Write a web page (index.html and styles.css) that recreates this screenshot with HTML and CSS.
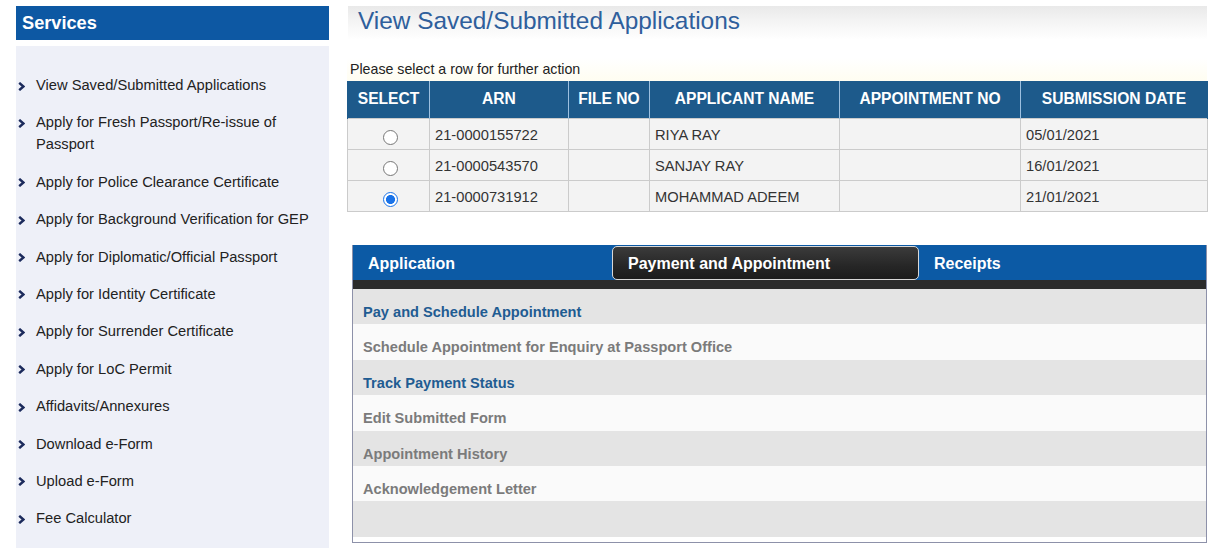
FILE: index.html
```html
<!DOCTYPE html>
<html>
<head>
<meta charset="utf-8">
<title>View Saved/Submitted Applications</title>
<link rel="stylesheet" href="styles.css">
</head>
<body>
<div class="page">
  <aside class="sidebar">
    <div class="side-head">Services</div>
    <ul class="side-menu">
      <li><span class="chev"><svg width="7" height="9" viewBox="0 0 7 9"><polyline points="1.2,0.8 5.4,4.5 1.2,8.2" fill="none" stroke="#1c2b5c" stroke-width="2.4"/></svg></span><span>View Saved/Submitted Applications</span></li>
      <li><span class="chev"><svg width="7" height="9" viewBox="0 0 7 9"><polyline points="1.2,0.8 5.4,4.5 1.2,8.2" fill="none" stroke="#1c2b5c" stroke-width="2.4"/></svg></span><span>Apply for Fresh Passport/Re-issue of Passport</span></li>
      <li><span class="chev"><svg width="7" height="9" viewBox="0 0 7 9"><polyline points="1.2,0.8 5.4,4.5 1.2,8.2" fill="none" stroke="#1c2b5c" stroke-width="2.4"/></svg></span><span>Apply for Police Clearance Certificate</span></li>
      <li><span class="chev"><svg width="7" height="9" viewBox="0 0 7 9"><polyline points="1.2,0.8 5.4,4.5 1.2,8.2" fill="none" stroke="#1c2b5c" stroke-width="2.4"/></svg></span><span>Apply for Background Verification for GEP</span></li>
      <li><span class="chev"><svg width="7" height="9" viewBox="0 0 7 9"><polyline points="1.2,0.8 5.4,4.5 1.2,8.2" fill="none" stroke="#1c2b5c" stroke-width="2.4"/></svg></span><span>Apply for Diplomatic/Official Passport</span></li>
      <li><span class="chev"><svg width="7" height="9" viewBox="0 0 7 9"><polyline points="1.2,0.8 5.4,4.5 1.2,8.2" fill="none" stroke="#1c2b5c" stroke-width="2.4"/></svg></span><span>Apply for Identity Certificate</span></li>
      <li><span class="chev"><svg width="7" height="9" viewBox="0 0 7 9"><polyline points="1.2,0.8 5.4,4.5 1.2,8.2" fill="none" stroke="#1c2b5c" stroke-width="2.4"/></svg></span><span>Apply for Surrender Certificate</span></li>
      <li><span class="chev"><svg width="7" height="9" viewBox="0 0 7 9"><polyline points="1.2,0.8 5.4,4.5 1.2,8.2" fill="none" stroke="#1c2b5c" stroke-width="2.4"/></svg></span><span>Apply for LoC Permit</span></li>
      <li><span class="chev"><svg width="7" height="9" viewBox="0 0 7 9"><polyline points="1.2,0.8 5.4,4.5 1.2,8.2" fill="none" stroke="#1c2b5c" stroke-width="2.4"/></svg></span><span>Affidavits/Annexures</span></li>
      <li><span class="chev"><svg width="7" height="9" viewBox="0 0 7 9"><polyline points="1.2,0.8 5.4,4.5 1.2,8.2" fill="none" stroke="#1c2b5c" stroke-width="2.4"/></svg></span><span>Download e-Form</span></li>
      <li><span class="chev"><svg width="7" height="9" viewBox="0 0 7 9"><polyline points="1.2,0.8 5.4,4.5 1.2,8.2" fill="none" stroke="#1c2b5c" stroke-width="2.4"/></svg></span><span>Upload e-Form</span></li>
      <li><span class="chev"><svg width="7" height="9" viewBox="0 0 7 9"><polyline points="1.2,0.8 5.4,4.5 1.2,8.2" fill="none" stroke="#1c2b5c" stroke-width="2.4"/></svg></span><span>Fee Calculator</span></li>
    </ul>
  </aside>

  <main class="main">
    <div class="title-bar"><h1>View Saved/Submitted Applications</h1></div>
    <div class="notice">Please select a row for further action</div>
    <table class="apps">
      <thead>
        <tr>
          <th class="c-sel">SELECT</th>
          <th class="c-arn">ARN</th>
          <th class="c-file">FILE NO</th>
          <th class="c-name">APPLICANT NAME</th>
          <th class="c-appt">APPOINTMENT NO</th>
          <th class="c-date">SUBMISSION DATE</th>
        </tr>
      </thead>
      <tbody>
        <tr>
          <td class="c-sel"><input type="radio" name="row"></td>
          <td>21-0000155722</td><td></td><td>RIYA RAY</td><td></td><td>05/01/2021</td>
        </tr>
        <tr>
          <td class="c-sel"><input type="radio" name="row"></td>
          <td>21-0000543570</td><td></td><td>SANJAY RAY</td><td></td><td>16/01/2021</td>
        </tr>
        <tr>
          <td class="c-sel"><input type="radio" name="row" checked></td>
          <td>21-0000731912</td><td></td><td>MOHAMMAD ADEEM</td><td></td><td>21/01/2021</td>
        </tr>
      </tbody>
    </table>

    <section class="tabs-panel">
      <div class="tab-bar">
        <div class="tab tab-app">Application</div>
        <div class="tab tab-pay active">Payment and Appointment</div>
        <div class="tab tab-rec">Receipts</div>
      </div>
      <div class="tab-strip"></div>
      <ul class="actions">
        <li class="link">Pay and Schedule Appointment</li>
        <li class="off">Schedule Appointment for Enquiry at Passport Office</li>
        <li class="link">Track Payment Status</li>
        <li class="off">Edit Submitted Form</li>
        <li class="off">Appointment History</li>
        <li class="off">Acknowledgement Letter</li>
        <li class="off"></li>
      </ul>
    </section>
  </main>
</div>
</body>
</html>
```

FILE: styles.css
```css
* { box-sizing: border-box; }

html, body {
  margin: 0;
  padding: 0;
  background: #ffffff;
  font-family: "Liberation Sans", Arial, sans-serif;
  color: #222;
}

.page {
  display: flex;
  align-items: flex-start;
  gap: 18px;
  padding: 6px 0 0 16px;
  height: 548px;
  overflow: hidden;
}

/* ---------- Sidebar ---------- */
.sidebar {
  width: 313px;
  flex: none;
  display: flex;
  flex-direction: column;
  gap: 6px;
  height: 560px;
}

.side-head {
  height: 34px;
  background: #0d58a3;
  color: #fff;
  font-weight: bold;
  font-size: 18.2px;
  line-height: 34px;
  padding-left: 6px;
}

.side-menu {
  flex: 1;
  margin: 0;
  list-style: none;
  background: #eef0f8;
  padding: 28px 10px 0 2px;
  display: flex;
  flex-direction: column;
  gap: 15.4px;
}

.side-menu li {
  display: flex;
  align-items: flex-start;
  font-size: 14.7px;
  line-height: 22px;
  color: #222;
}

.chev {
  flex: none;
  width: 18px;
  height: 22px;
  display: flex;
  align-items: center;
  padding-top: 2px;
}

/* ---------- Main ---------- */
.main {
  width: 860px;
  flex: none;
  display: flex;
  flex-direction: column;
}

.title-bar {
  margin-left: 1px;
  height: 34px;
  background: linear-gradient(to bottom, #e9e9e9 0%, #f4f4f4 45%, #ffffff 100%);
  padding-left: 10px;
}

.title-bar h1 {
  margin: 0;
  font-weight: normal;
  font-size: 24.4px;
  line-height: 29px;
  color: #2f5f9c;
}

.notice {
  margin-top: 18px;
  height: 23px;
  background: linear-gradient(to bottom, #ffffff 0%, #fffdf1 100%);
  font-size: 14.2px;
  line-height: 23px;
  padding-left: 3px;
  color: #222;
}

.apps {
  border-collapse: collapse;
  width: 860px;
  table-layout: fixed;
}

.apps th {
  background: #1d5a8b;
  color: #fff;
  font-weight: bold;
  font-size: 15.6px;
  height: 37px;
  padding: 0 0 2px;
  text-align: center;
  border-left: 1px solid #9dc0e0;
  border-right: 1px solid #9dc0e0;
  border-top: 1px solid #1d5a8b;
}

.apps th:first-child { border-left-color: #1d5a8b; }
.apps th:last-child { border-right-color: #1d5a8b; }

.apps td {
  background: #f3f3f3;
  border: 1px solid #cbcbcb;
  height: 31px;
  padding: 1px 0 0 5px;
  font-size: 14.7px;
  color: #333;
}

.apps td.c-sel {
  text-align: center;
  padding: 5px 0 0 4px;
}

.apps input[type="radio"] {
  -webkit-appearance: none;
  appearance: none;
  margin: 0;
  width: 15px;
  height: 15px;
  border-radius: 50%;
  border: 1.4px solid #777;
  background: #fff;
  vertical-align: middle;
}

.apps input[type="radio"]:checked {
  border: 1.6px solid #1a73e8;
  background: radial-gradient(circle, #1a73e8 0 4.2px, #fff 4.8px);
}

.c-sel { width: 82px; }
.c-arn { width: 139px; }
.c-file { width: 81px; }
.c-name { width: 190px; }
.c-appt { width: 181px; }
.c-date { width: 187px; }

/* ---------- Tabs panel ---------- */
.tabs-panel {
  margin: 33px 0 0 5px;
  width: 855px;
  border-left: 1px solid #8d91a9;
  border-right: 1px solid #8d91a9;
  border-bottom: 1px solid #8d91a9;
  padding-bottom: 5px;
}

.tab-bar {
  display: flex;
  height: 35px;
  background: #0c5aa5;
}

.tab {
  color: #fff;
  font-weight: bold;
  font-size: 16px;
  line-height: 37px;
  padding-left: 15px;
}

.tab-app { width: 259px; }
.tab-pay { width: 307px; }
.tab-rec { flex: 1; }

.tab.active {
  background: linear-gradient(to bottom, #3b3b3b 0%, #262626 60%, #1c1c1c 100%);
  border: 1px solid #d8d8d8;
  border-radius: 5px;
  line-height: 33px;
  margin-top: 1px;
}

.tab-strip {
  height: 9px;
  background: #2b2b2b;
}

.actions {
  list-style: none;
  margin: 0;
  padding: 0;
}

.actions li {
  height: 35.4px;
  line-height: 24px;
  padding: 11px 0 0 10px;
  font-weight: bold;
  font-size: 14.6px;
}

.actions li:nth-child(odd) { background: #e4e4e4; }
.actions li:nth-child(even) { background: #fafafa; }

.actions li.link { color: #1f5c92; }
.actions li.off { color: #7b7b7b; }
```
